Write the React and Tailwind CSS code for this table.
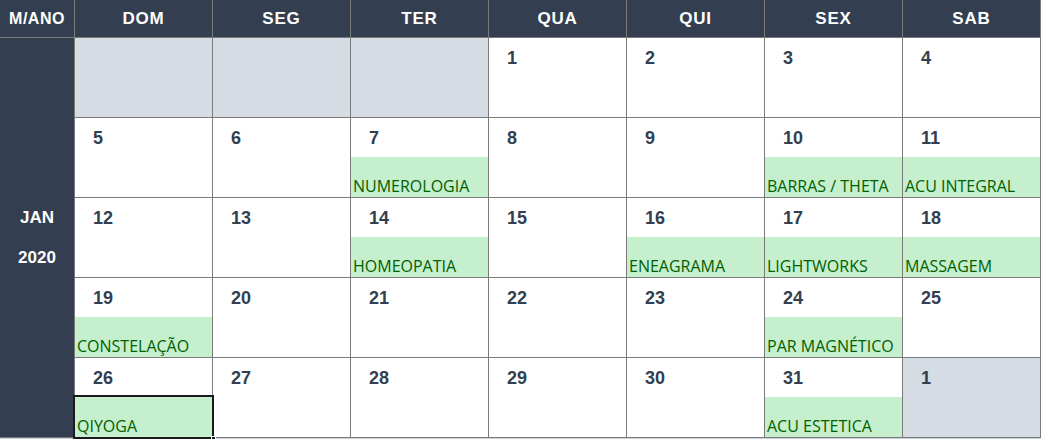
import React from "react";

const days = ["DOM", "SEG", "TER", "QUA", "QUI", "SEX", "SAB"];

// each week: [day, event, flags]
const weeks = [
  [null, null, null, { d: 1 }, { d: 2 }, { d: 3 }, { d: 4 }],
  [
    { d: 5 },
    { d: 6 },
    { d: 7, ev: "NUMEROLOGIA" },
    { d: 8 },
    { d: 9 },
    { d: 10, ev: "BARRAS / THETA" },
    { d: 11, ev: "ACU INTEGRAL" },
  ],
  [
    { d: 12 },
    { d: 13 },
    { d: 14, ev: "HOMEOPATIA" },
    { d: 15 },
    { d: 16, ev: "ENEAGRAMA" },
    { d: 17, ev: "LIGHTWORKS" },
    { d: 18, ev: "MASSAGEM" },
  ],
  [
    { d: 19, ev: "CONSTELAÇÃO" },
    { d: 20 },
    { d: 21 },
    { d: 22 },
    { d: 23 },
    { d: 24, ev: "PAR MAGNÉTICO" },
    { d: 25 },
  ],
  [
    { d: 26, ev: "QIYOGA", selected: true },
    { d: 27 },
    { d: 28 },
    { d: 29 },
    { d: 30 },
    { d: 31, ev: "ACU ESTETICA" },
    { d: 1, other: true },
  ],
];

function DayCell({ cell }) {
  if (!cell) return <div className="bg-[#d6dce4]" />;
  return (
    <div className={`flex flex-col ${cell.other ? "bg-[#d6dce4]" : "bg-white"}`}>
      <div className="h-[39px] pl-[18px] pt-[11px] text-[18px] leading-[18px] font-bold text-[#333f50] [font-family:'Liberation_Sans',Arial,sans-serif]">
        {cell.d}
      </div>
      {cell.ev ? (
        <div
          className={`relative h-[40px] flex items-end pl-[2px] pb-[3px] bg-[#c6efce] text-[#006100] text-[16px] leading-none whitespace-nowrap [font-family:'Open_Sans',sans-serif] ${
            cell.selected ? "outline-2 outline-[#1c1a1f] z-10" : ""
          }`}
        >
          {cell.ev}
          {cell.selected && (
            <span className="absolute -right-[4px] -bottom-[4px] w-[5px] h-[5px] bg-[#1c1a1f] border border-white" />
          )}
        </div>
      ) : (
        <div className="h-[40px]" />
      )}
    </div>
  );
}

export default function App() {
  return (
    <div className="w-[1042px] h-[439px] bg-white overflow-hidden">
      <div className="grid w-max grid-cols-[74px_repeat(7,137px)] grid-rows-[37px_repeat(5,79px)] gap-px bg-[#7a7a7a] border-r border-b border-[#7a7a7a]">
        <div className="bg-[#333f50] flex items-center justify-center text-white font-bold text-[16px] tracking-[0.5px] [font-family:'Liberation_Sans',Arial,sans-serif]">
          M/ANO
        </div>
        {days.map((d) => (
          <div
            key={d}
            className="bg-[#333f50] flex items-center justify-center text-white font-bold text-[17px] tracking-[0.8px] [font-family:'Liberation_Sans',Arial,sans-serif]"
          >
            {d}
          </div>
        ))}

        <div className="row-span-5 bg-[#333f50] flex flex-col items-center justify-center gap-[20px] text-white font-bold text-[17px] leading-[20px] [font-family:'Liberation_Sans',Arial,sans-serif]">
          <span>JAN</span>
          <span>2020</span>
        </div>
        {weeks.map((week, wi) =>
          week.map((cell, ci) => <DayCell key={`${wi}-${ci}`} cell={cell} />)
        )}
      </div>
      <div className="h-px w-[1041px] bg-[#c9d1db]" />
    </div>
  );
}
